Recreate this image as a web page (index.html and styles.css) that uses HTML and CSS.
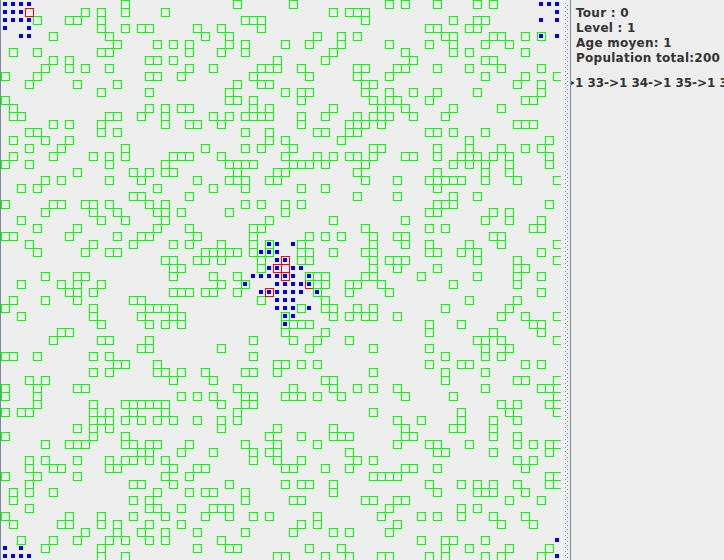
FILE: index.html
```html
<!DOCTYPE html>
<html lang="fr">
<head>
<meta charset="utf-8">
<title>Simulation</title>
<link rel="stylesheet" href="styles.css">
</head>
<body>
<main class="split">
  <section class="world">
    <svg class="board" id="board" width="560" height="560" viewBox="0 0 560 560" shape-rendering="crispEdges"></svg>
  </section>
  <div class="divider">
    <svg width="8" height="560" shape-rendering="crispEdges">
      <defs>
        <pattern id="bumps" x="2" y="2" width="4" height="4" patternUnits="userSpaceOnUse">
          <rect class="bump-light" x="0" y="0" width="1" height="1"/>
          <rect class="bump-dark" x="1" y="1" width="1" height="1"/>
          <rect class="bump-light" x="2" y="2" width="1" height="1"/>
          <rect class="bump-dark" x="3" y="3" width="1" height="1"/>
        </pattern>
      </defs>
      <rect x="2" y="2" width="4" height="556" fill="url(#bumps)"/>
    </svg>
  </div>
  <aside class="stats">
    <p class="line">Tour : 0</p>
    <p class="line">Level : 1</p>
    <p class="line">Age moyen: 1</p>
    <p class="line">Population total:200</p>
    <div class="ages"><span class="ages-text">&gt;1 33-&gt;1 34-&gt;1 35-&gt;1 36-&gt;1</span></div>
  </aside>
</main>
<script src="board.js"></script>
</body>
</html>
```
FILE: styles.css
```css
body {
  margin: 0;
  background: #eeeeee;
  overflow: hidden;
}

.split {
  display: flex;
  width: 724px;
  height: 560px;
}

.world {
  flex: none;
  box-sizing: border-box;
  width: 562px;
  height: 560px;
  border-left: 1px solid #7a8a99;
  border-right: 1px solid #ffffff;
}

.board,
.divider svg {
  display: block;
}

.grass, .hunter {
  fill: none;
  stroke-width: 1;
}

.grass { stroke: #00ff00; }
.hunter { stroke: #ff0000; }
.agent { fill: #0000ff; }

.divider {
  flex: none;
  width: 8px;
}

.bump-light { fill: #ffffff; }
.bump-dark { fill: #7a8a99; }

.stats {
  flex: 1;
  min-width: 0;
  box-sizing: border-box;
  border-left: 1px solid #7a8a99;
  padding-top: 6px;
  overflow: hidden;
  color: #333333;
  font: bold 12px/15px "DejaVu Sans", sans-serif;
  letter-spacing: 0.26px;
  white-space: nowrap;
}

.line {
  margin: 0 0 0 5px;
}

.ages {
  margin-top: 10px;
  overflow: hidden;
  letter-spacing: -0.04px;
}

.ages-text {
  margin-left: -6px;
}
```
FILE: board.js
```js
// Each row lists its occupied columns; "|" starts the next band of 24 columns.
const GRASS = `
15|5,12|0,2,6,11,13
10,12,15,20|17,19,20,21|
4,8,9,12|6,7,8,21|8,11,12
12,15,17,18|0,3,8|5,6,10,11
6,13|1,4,15,18,20|7,8,13,14,17,19
14,19,21,23|4,6,11,14,18|0,5,8,12,15
1,4,12,13,23|3,6,17|2,8,10,17
6,8,18,19,21|10,16|3,12,13
5,8,10,13,23|2,8,9,10,13,20,21|1,2,6,10,14,19
0,4,18,19,22|7,14,20|0,12,17,21
3,9,14|5,8,9,21,22|16,19
12,18|4,11,13,14,21|0,3,6,11,19
0|4,5,7,13,22|0,1,5,17,18
1,18,20,22,23|7,9,17,23|2,8,14
1,2,13,14,17,20|2,4,6,7,8,9,13,16,20,22|0,3,7
6,8,12,20,23|0,3,13,19,20,21,23|16,17,18
3,4,12,14|6,9,15,16,19,20|5,6,8,12
1,5,8|9,11,18|10,20
3,7,15|1,6,8,12,22,23|6,10,14,17,19
1,6,11,13,15,21,22,23|3,11,15,17,19,20,22|2,3,6,9,10,11,13,15,20
0,3,13,20|4,5,6,7,12,13,14,16,21|8,10,12,15,20
9,16,18,20,21|5,10,11,20|6,12,15
5,7,13,17|0,4,5,6,9,10,21|1,5,6,7,8,9,12,16,21
2,4,19|2,6,13,16|6
16,17,23|20|1,8,11
0,6,7,10,11,13,18,20|6,8,11,13|6,7,8,20
5,11,14,19,20,22|4,11|5,6,13,15
2,12,15,20|9,17|2,12,15,19
4,9,19,23|7,8,21|5,7,18,19
0,1,8,14,17,18|0,7,14,16,18,22|1,2,13,14
3,11,16,21,23|3,7,9,13,22|2,5,10,14,21
4,10,13,14|1,2,3,4,5,7,9,13,14,17,21,22|5,6,9,11,19
20,21|0,1,3,8,13,14,22|0,1,2,11,16,21
21,22|8,22|1,6,16,17
5,9,10,21|2,5,14,15,16,21,22|4,11,16,19
2,7,9,12|3,6,15,16,19,20,23|8,16
8,9,11,21,22,23|1,2,5,15,19|0,19
1,5,9,16,17|8,16|10,16
0,11,18,19,20,21|13,16,17,20,22|7,15
2,11,17,21,22|11,17,19,21,22|1,14,17,21
12,18,20,22|11,12,13,14|5,9,18,19
7,8|11,16|5,13,19
6,12,13,18|7,12,15,19|11,12,14,21
17,18|3,14,22|5,12,15
0,1,4,11,13|7|7,12,14
14,15,19|10,11,13,15|5,9,10,17,19
11,13,19,20,22|1,6,7,10,22|7,12
3,5,21|2,16,17|7,16,17,21
0,4,9,10|5,12,17,20,22|1,12,19,20,21
0,4,22|0,2,6,7,11,12,13,15,18|2,8,21
4,11,15,16,17,18,19,20|3,6,7|14,16,20,21
0,2,3,11,13,16,20|5,22|9,15,21
11,12,13,15,17,19,21|0,3,5|1,4,9,13,16
9,11,13|3,10,17|2,8,9,13
0,11,15|9,13,17,18,19|2,3,13,16
5,8,9,10,15,16,18,19,23|6,10,15|1,5,6,10,16,18,20,21
17,18,22|2,7,9,10,19|6,7,13,20
3,5,9,13,15,16,18,20|7,10,13,20,22|16,18
3,6,7,13,14,21|0,1,11,12,16,19|2,3,6,17
0,4,9,20,23|22,23|0,1,20,21
3,16,17,21|4,11,13,14,17|5,9,11,13,16,20,21
1,3,6,19,23|1,2,6,17|6,11,12,13,17
1,16,18|6,12,13,21,22|1,2,15,19
3,18,19,22|2,3,4|0,9,11
0,8,12,16,20|1,4,7,9,15,23|4,6,9,13,17
1,7,8,12,14,18,22|13,15|1,14,18
10,14,17,20|0,6,12,17,19|0
2,6,9,13,15,18,20|3|4,7,8,12
5,12|0,4,5,14,18|7,10,15,20
12,15|10,11,16,19,23|0,5,7,12,14,19`;

const HUNTERS = [[3, 1], [35, 32], [34, 33], [35, 33], [35, 34], [38, 35], [33, 36]];

const AGENTS = {
  0: [0, 1, 2, 3, 67, 68, 69],
  1: [0, 1, 2, 69],
  2: [0, 1, 2, 3, 67, 69],
  3: [0, 3],
  4: [2, 3, 67, 69],
  30: [33, 34, 36],
  31: [32, 33, 34],
  32: [34, 35],
  33: [33, 34, 36, 37],
  34: [31, 32, 33, 34, 35, 36, 38],
  35: [30, 34, 35, 36, 37, 38],
  36: [32, 33, 34, 35, 36, 37, 39],
  37: [34, 35, 36],
  38: [34, 35, 36, 38],
  39: [35, 36],
  40: [35],
  67: [69],
  68: [0, 2],
  69: [0, 1, 2, 3, 69]
};

const CELL = 8;
const outline = (c, r) => `M${c * CELL + 0.5} ${r * CELL + 0.5}h8v8h-8z`;
const dot = (c, r) => `M${c * CELL + 2} ${r * CELL + 2}h4v4h-4z`;

const grass = GRASS.trim().split("\n").flatMap((row, r) =>
  row.split("|").flatMap((band, b) =>
    band.split(",").filter(Boolean).map(c => outline(b * 24 + Number(c), r))));
const hunters = HUNTERS.map(([c, r]) => outline(c, r));
const agents = Object.entries(AGENTS).flatMap(([r, cols]) => cols.map(c => dot(c, r)));

document.getElementById("board").innerHTML =
  `<path class="hunter" d="${hunters.slice(5, 6).join("")}"/>` +
  `<path class="grass" d="${grass.join("")}"/>` +
  `<path class="hunter" d="${hunters.filter((_, i) => i !== 5).join("")}"/>` +
  `<path class="agent" d="${agents.join("")}"/>`;
```
